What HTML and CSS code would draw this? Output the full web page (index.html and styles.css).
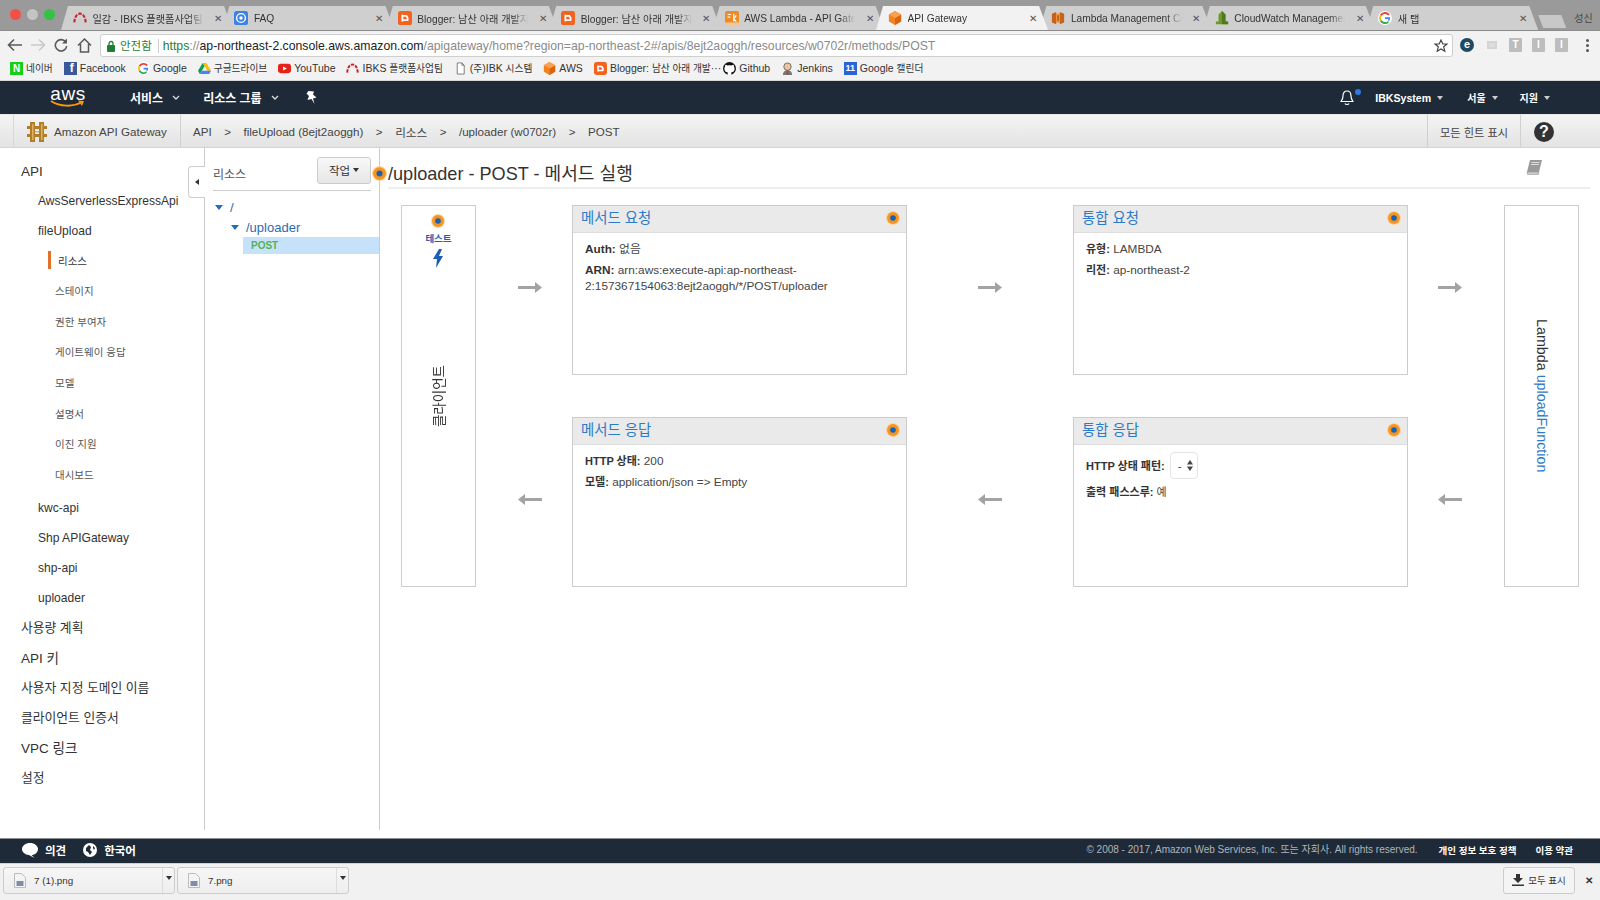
FILE: index.html
```html
<!DOCTYPE html>
<html lang="ko">
<head>
<meta charset="utf-8">
<title>API Gateway</title>
<link rel="stylesheet" href="styles.css">
</head>
<body>
<svg class="defs" width="0" height="0" aria-hidden="true">
  <symbol id="ibks" viewBox="0 0 16 16"><path d="M1.5 13C2 6 5 3 8 3s6 3 6.500 10" fill="none" stroke="#c8232c" stroke-width="2.400" stroke-dasharray="4 1.500"/></symbol>
  <symbol id="faq" viewBox="0 0 16 16"><rect width="16" height="16" rx="3" fill="#3b82e8"/><circle cx="8" cy="8" r="5" fill="none" stroke="#fff" stroke-width="1.600"/><circle cx="8" cy="8" r="2" fill="#fff"/></symbol>
  <symbol id="blogger" viewBox="0 0 16 16"><rect width="16" height="16" rx="3" fill="#f4621f"/><path d="M5 5.500h4.500M5 10.500h6M5 5v6M9.500 5.500 11 8v2.500" fill="none" stroke="#fff" stroke-width="2" stroke-linecap="round"/></symbol>
  <symbol id="lamtab" viewBox="0 0 16 16"><rect width="16" height="16" rx="2" fill="#f08a24"/><path d="M3 4h4M3 7h3M10 3v9M10 9l3-4M10 9l3 3" stroke="#fff" stroke-width="1.300" fill="none"/><rect y="13" width="16" height="3" fill="#f4c58f"/></symbol>
  <symbol id="cube" viewBox="0 0 16 16"><path d="M8 0 15 4v8l-7 4-7-4V4z" fill="#f58220"/><path d="M8 8 15 4v8l-7 4z" fill="#d9660f"/><path d="M8 0 15 4 8 8 1 4z" fill="#f9a252"/></symbol>
  <symbol id="lam" viewBox="0 0 16 16"><path d="M1 3 6 1v14l-5-2z" fill="#c8611a"/><path d="M15 3 10 1v14l5-2z" fill="#c8611a"/><path d="M6 3h4v10H6z" fill="#f08a24"/><path d="M7.500 5h1v6h-1z" fill="#7a3a10"/></symbol>
  <symbol id="cw" viewBox="0 0 16 16"><path d="M8 0 12 4v8h3v3H1v-3h3V4z" fill="#6a9a2a"/><path d="M8 0 12 4v8h3v3H8z" fill="#4d7a1c"/></symbol>
  <symbol id="goog" viewBox="0 0 16 16"><circle cx="8" cy="8" r="8" fill="#fff"/><path d="M12.600 4.400A5.800 5.800 0 0 0 3 5.200" fill="none" stroke="#e94235" stroke-width="2.200"/><path d="M3 5.200a5.800 5.800 0 0 0 0 5.600" fill="none" stroke="#fabb05" stroke-width="2.200"/><path d="M3 10.800a5.800 5.800 0 0 0 8.700 1.700" fill="none" stroke="#34a853" stroke-width="2.200"/><path d="M11.700 12.500A5.800 5.800 0 0 0 13.800 7.200H8v1.900h3.700" fill="#4285f4"/></symbol>
  <symbol id="dot" viewBox="0 0 16 16"><circle cx="8" cy="8" r="8" fill="#fbd3a5"/><circle cx="8" cy="8" r="6.800" fill="#f7941e"/><circle cx="8" cy="8" r="3.200" fill="#1461b8"/></symbol>
</svg>

<div class="tabstrip">
  <div class="lights"><i class="light red"></i><i class="light grey"></i><i class="light green"></i></div>
  <div class="tab"><svg class="fav"><use href="#ibks"/></svg><span class="tab-title">일감 - IBKS 플랫폼사업팀</span><span class="tab-x">✕</span></div>
  <div class="tab"><svg class="fav"><use href="#faq"/></svg><span class="tab-title">FAQ</span><span class="tab-x">✕</span></div>
  <div class="tab"><svg class="fav"><use href="#blogger"/></svg><span class="tab-title">Blogger: 남산 아래 개발자들</span><span class="tab-x">✕</span></div>
  <div class="tab"><svg class="fav"><use href="#blogger"/></svg><span class="tab-title">Blogger: 남산 아래 개발자들</span><span class="tab-x">✕</span></div>
  <div class="tab"><svg class="fav"><use href="#lamtab"/></svg><span class="tab-title">AWS Lambda - API Gateway</span><span class="tab-x">✕</span></div>
  <div class="tab active"><svg class="fav"><use href="#cube"/></svg><span class="tab-title">API Gateway</span><span class="tab-x">✕</span></div>
  <div class="tab"><svg class="fav"><use href="#lam"/></svg><span class="tab-title">Lambda Management Console</span><span class="tab-x">✕</span></div>
  <div class="tab"><svg class="fav"><use href="#cw"/></svg><span class="tab-title">CloudWatch Management Console</span><span class="tab-x">✕</span></div>
  <div class="tab"><svg class="fav"><use href="#goog"/></svg><span class="tab-title">새 탭</span><span class="tab-x">✕</span></div>
  <div class="newtab"></div>
  <span class="profile">성신</span>
</div>

<div class="toolbar">
  <svg class="tool t-back" width="16" height="14" viewBox="0 0 16 14"><path d="M15 7H2M7 1.500 1.500 7 7 12.500" fill="none" stroke="#5a5a5a" stroke-width="1.600"/></svg>
  <svg class="tool t-fwd" width="16" height="14" viewBox="0 0 16 14"><path d="M1 7h13M9 1.500 14.500 7 9 12.500" fill="none" stroke="#c9c9c9" stroke-width="1.600"/></svg>
  <svg class="tool t-reload" width="14" height="14" viewBox="0 0 14 14"><path d="M12 4.500A5.700 5.700 0 1 0 12.700 8" fill="none" stroke="#5a5a5a" stroke-width="1.600"/><path d="M13 0.500v5H8z" fill="#5a5a5a"/></svg>
  <svg class="tool t-home" width="15" height="15" viewBox="0 0 15 15"><path d="M1 7.500 7.500 1 14 7.500M3.500 6v8h8V6" fill="none" stroke="#5a5a5a" stroke-width="1.500"/></svg>
  <div class="omnibox">
    <svg class="lock" width="10" height="12" viewBox="0 0 10 12"><rect x="1" y="5" width="8" height="7" rx="1" fill="#1e7e34"/><path d="M3 5V3.500a2 2 0 0 1 4 0V5" fill="none" stroke="#1e7e34" stroke-width="1.300"/></svg>
    <span class="secure">안전함</span>
    <span class="url"><span class="u-https">https</span><span class="u-dim">://</span><span class="u-host">ap-northeast-2.console.aws.amazon.com</span><span class="u-dim">/apigateway/home?region=ap-northeast-2#/apis/8ejt2aoggh/resources/w0702r/methods/POST</span></span>
    <svg class="star" width="14" height="14" viewBox="0 0 14 14"><path d="M7 1l1.800 4h4.200l-3.300 2.800 1.100 4.400L7 9.900 3.200 12.200l1.100-4.400L1 5h4.200z" fill="none" stroke="#444" stroke-width="1.200"/></svg>
  </div>
  <div class="exts">
    <span class="ext-e">e</span>
    <span class="ext-mini"></span>
    <span class="ext-box">T</span>
    <span class="ext-box">I</span>
    <span class="ext-box">I</span>
    <span class="ext-menu"><i></i><i></i><i></i></span>
  </div>
</div>

<div class="bookmarks">
  <span class="bm"><span class="bm-naver">N</span><span class="k">네이버</span></span>
  <span class="bm"><span class="bm-fb">f</span>Facebook</span>
  <span class="bm"><svg class="bi"><use href="#goog"/></svg>Google</span>
  <span class="bm"><svg class="bi" viewBox="0 0 14 14"><path d="M5 1h4l5 8.500h-4z" fill="#fbbc04"/><path d="M5 1 0 9.500l2 3.500 5-8.500z" fill="#0f9d58"/><path d="M2 13h10l2-3.500H4z" fill="#4285f4"/></svg><span class="k">구글드라이브</span></span>
  <span class="bm"><svg class="bi" viewBox="0 0 14 14"><rect y="2" width="14" height="10" rx="3" fill="#e62117"/><path d="M5.500 4.800v4.400L9.500 7z" fill="#fff"/></svg>YouTube</span>
  <span class="bm"><svg class="bi"><use href="#ibks"/></svg><span>IBKS <span class="k">플랫폼사업팀</span></span></span>
  <span class="bm"><svg class="bi" viewBox="0 0 14 14"><path d="M3.500 1h5l2.500 2.500V13h-7.500zM8.500 1v2.500H11" fill="#fff" stroke="#777"/></svg><span>(<span class="k">주</span>)IBK <span class="k">시스템</span></span></span>
  <span class="bm"><svg class="bi"><use href="#cube"/></svg>AWS</span>
  <span class="bm"><svg class="bi"><use href="#blogger"/></svg><span>Blogger: <span class="k">남산 아래 개발</span>···</span></span>
  <span class="bm tight"><svg class="bi" viewBox="0 0 14 14"><circle cx="7" cy="7" r="7" fill="#111"/><path d="M5 14v-3c-2.500 0-3.500-1.500-3.500-4 0-1 .3-1.600.8-2.200-.1-.6-.1-1.300.2-1.900 1 0 1.600.4 2.200.9a7 7 0 0 1 4.600 0c.6-.5 1.200-.9 2.200-.9.300.6.300 1.300.2 1.900.5.600.8 1.200.8 2.200 0 2.500-1 4-3.500 4v3z" fill="#fff"/></svg>Github</span>
  <span class="bm"><svg class="bi" viewBox="0 0 14 14"><circle cx="7" cy="5" r="4" fill="#e8c4a0" stroke="#555" stroke-width=".8"/><path d="M2 14c0-3 2-5 5-5s5 2 5 5z" fill="#777"/><path d="M6 9h2l-.5 5h-1z" fill="#c33"/></svg>Jenkins</span>
  <span class="bm"><span class="bm-cal">11</span><span>Google <span class="k">캘린더</span></span></span>
</div>

<nav class="awsnav">
  <div class="awslogo"><span class="aws-word">aws</span><svg class="smile" width="36" height="8" viewBox="0 0 36 8"><path d="M1 1c9 6 22 6 31 1" fill="none" stroke="#f90" stroke-width="2"/><path d="M28 0.500l6 .5-2 5z" fill="#f90"/></svg></div>
  <span class="nav-item nav-svc">서비스<svg class="chev" width="8" height="6" viewBox="0 0 8 6"><path d="M1 1l3 3 3-3" fill="none" stroke="#ddd" stroke-width="1.300"/></svg></span>
  <span class="nav-item nav-res">리소스 그룹<svg class="chev" width="8" height="6" viewBox="0 0 8 6"><path d="M1 1l3 3 3-3" fill="none" stroke="#ddd" stroke-width="1.300"/></svg></span>
  <svg class="pin" width="11" height="13" viewBox="0 0 11 13"><path d="M2.500 0 8 .5 7 3.500l3.500 3L7 7.500 8.500 13 5.500 8 1.500 9 3 5 .5 2.500z" fill="#fff"/></svg>
  <div class="nav-right">
    <span class="bell"><svg width="14" height="16" viewBox="0 0 14 16"><path d="M7 1c3 0 4 2.500 4 5 0 3 1.500 4.500 2 5.500H1C1.500 10.500 3 9 3 6c0-2.500 1-5 4-5zM5 13.500c.5 1.300 3.500 1.300 4 0" fill="none" stroke="#fff" stroke-width="1.200"/></svg><i class="bell-dot"></i></span>
    <span class="nav-small nav-user">IBKSystem<i class="caret"></i></span>
    <span class="nav-small nav-region">서울<i class="caret"></i></span>
    <span class="nav-small nav-help">지원<i class="caret"></i></span>
  </div>
</nav>

<header class="crumbbar">
  <div class="brand">
    <svg width="20" height="22" viewBox="0 0 20 22"><g fill="#b07d2b"><rect x="0" y="5" width="20" height="3"/><rect x="0" y="13" width="20" height="3"/><rect x="3" y="1" width="5" height="20"/><rect x="12" y="1" width="5" height="20"/></g><g fill="#e3b163"><rect x="5" y="3" width="1.500" height="16"/><rect x="14" y="3" width="1.500" height="16"/><rect x="8" y="10" width="4" height="1.500"/></g></svg>
    <span>Amazon API Gateway</span>
  </div>
  <div class="crumbs">
    <span>API</span><b>&gt;</b><span>fileUpload (8ejt2aoggh)</span><b>&gt;</b><span>리소스</span><b>&gt;</b><span>/uploader (w0702r)</span><b>&gt;</b><span>POST</span>
  </div>
  <div class="hints">모든 힌트 표시</div>
  <div class="helpcell"><span class="helpicon">?</span></div>
</header>

<main class="page">
  <aside class="sidebar">
    <a class="s1">API</a>
    <a class="s2">AwsServerlessExpressApi</a>
    <a class="s2">fileUpload</a>
    <a class="s3 current">리소스</a>
    <a class="s3">스테이지</a>
    <a class="s3">권한 부여자</a>
    <a class="s3">게이트웨이 응답</a>
    <a class="s3">모델</a>
    <a class="s3">설명서</a>
    <a class="s3">이진 지원</a>
    <a class="s3">대시보드</a>
    <a class="s2 after-sub">kwc-api</a>
    <a class="s2">Shp APIGateway</a>
    <a class="s2">shp-api</a>
    <a class="s2">uploader</a>
    <a class="s1 ko after-api">사용량 계획</a>
    <a class="s1">API 키</a>
    <a class="s1 ko">사용자 지정 도메인 이름</a>
    <a class="s1 ko">클라이언트 인증서</a>
    <a class="s1">VPC 링크</a>
    <a class="s1 ko">설정</a>
    <span class="collapse"><i></i></span>
  </aside>

  <section class="tree">
    <div class="tree-head"><span>리소스</span><button class="action">작업<i class="caret dark"></i></button></div>
    <div class="node n-root"><i class="tw"></i><a>/</a></div>
    <div class="node n-up"><i class="tw"></i><a>/uploader</a></div>
    <div class="node-post">POST</div>
    <svg class="tree-dot"><use href="#dot"/></svg>
  </section>

  <section class="content">
    <div class="title-row">
      <h1>/uploader - POST - 메서드 실행</h1>
      <svg width="17" height="16" viewBox="0 0 17 16"><path d="M4 1h12l-3 12H1z" fill="#9a9a9a"/><path d="M1 13h12l-.5 2.500H1.500z" fill="#ccc" stroke="#999" stroke-width=".6"/><path d="M5.500 3.500h8M5 5.500h8" stroke="#ddd"/></svg>
    </div>
    <div class="flow">
      <div class="side client">
        <div class="test">
          <svg class="dot"><use href="#dot"/></svg>
          <a>테스트</a>
          <svg width="11" height="19" viewBox="0 0 11 19"><path d="M6 0 0 10h4L3 19l7-12H6l3-7z" fill="#1a5fb4"/></svg>
        </div>
        <span class="vert up">클라이언트</span>
      </div>

      <div class="arrow-cell a-first"><svg width="24" height="11" viewBox="0 0 24 11"><path d="M0 4h17V0l7 5.500-7 5.500V7H0z" fill="#a3a3a3"/></svg></div>

      <div class="card">
        <div class="card-h"><a>메서드 요청</a><svg class="dot"><use href="#dot"/></svg></div>
        <div class="card-b">
          <p><b>Auth:</b> 없음</p>
          <p><b>ARN:</b> arn:aws:execute-api:ap-northeast-2:157367154063:8ejt2aoggh/*/POST/uploader</p>
        </div>
      </div>

      <div class="arrow-cell"><svg width="24" height="11" viewBox="0 0 24 11"><path d="M0 4h17V0l7 5.500-7 5.500V7H0z" fill="#a3a3a3"/></svg></div>

      <div class="card">
        <div class="card-h"><a>통합 요청</a><svg class="dot"><use href="#dot"/></svg></div>
        <div class="card-b">
          <p><b class="ko">유형:</b> LAMBDA</p>
          <p><b class="ko">리전:</b> ap-northeast-2</p>
        </div>
      </div>

      <div class="arrow-cell a-last"><svg width="24" height="11" viewBox="0 0 24 11"><path d="M0 4h17V0l7 5.500-7 5.500V7H0z" fill="#a3a3a3"/></svg></div>

      <div class="side lambda"><span class="vert big">Lambda <a>uploadFunction</a></span></div>

      <div class="arrow-cell row3 a-first"><svg width="24" height="11" viewBox="0 0 24 11"><path d="M24 4H7V0L0 5.500 7 11V7h17z" fill="#a3a3a3"/></svg></div>

      <div class="card row3">
        <div class="card-h"><a>메서드 응답</a><svg class="dot"><use href="#dot"/></svg></div>
        <div class="card-b">
          <p><b class="ko">HTTP 상태:</b> 200</p>
          <p><b class="ko">모델:</b> application/json =&gt; Empty</p>
        </div>
      </div>

      <div class="arrow-cell row3"><svg width="24" height="11" viewBox="0 0 24 11"><path d="M24 4H7V0L0 5.500 7 11V7h17z" fill="#a3a3a3"/></svg></div>

      <div class="card row3">
        <div class="card-h"><a>통합 응답</a><svg class="dot"><use href="#dot"/></svg></div>
        <div class="card-b">
          <p class="pattern"><b class="ko">HTTP 상태 패턴:</b><span class="sel">-<svg width="6" height="11" viewBox="0 0 6 11"><path d="M3 0l3 4.500H0zM3 11l3-4.500H0z" fill="#444"/></svg></span></p>
          <p class="ko-line"><b class="ko">출력 패스스루:</b> 예</p>
        </div>
      </div>

      <div class="arrow-cell row3 a-last"><svg width="24" height="11" viewBox="0 0 24 11"><path d="M24 4H7V0L0 5.500 7 11V7h17z" fill="#a3a3a3"/></svg></div>
    </div>
  </section>
</main>

<footer class="awsfoot">
  <svg class="f-ic" width="16" height="15" viewBox="0 0 16 15"><path d="M8 0c4.400 0 8 2.700 8 6s-3 6-6.500 6l3 3-5.500-3C3 11.700 0 9.200 0 6c0-3.300 3.600-6 8-6z" fill="#fff"/></svg>
  <span class="f-label">의견</span>
  <svg class="f-ic f-globe" width="14" height="14" viewBox="0 0 14 14"><circle cx="7" cy="7" r="7" fill="#fff"/><path d="M3 5l3-3 2 2-1 3 2 2-2 3-2-3-2-1zM10 3l2 2-1 2-1-2z" fill="#1f2a38"/></svg>
  <span class="f-label">한국어</span>
  <span class="f-copy">© 2008 - 2017, Amazon Web Services, Inc. 또는 자회사. All rights reserved.</span>
  <span class="f-link f-privacy">개인 정보 보호 정책</span>
  <span class="f-link f-terms">이용 약관</span>
</footer>

<div class="downloads">
  <div class="dl"><svg class="dl-ic" width="12" height="15" viewBox="0 0 12 15"><path d="M.5.500h7l4 4v10H.500z" fill="#f4f4f4" stroke="#bbb"/><rect x="2.500" y="8" width="7" height="5" fill="#7d8fa8"/></svg><span class="dl-name">7 (1).png</span><span class="dl-drop"><i class="caret dark"></i></span></div>
  <div class="dl dl2"><svg class="dl-ic" width="12" height="15" viewBox="0 0 12 15"><path d="M.5.500h7l4 4v10H.500z" fill="#f4f4f4" stroke="#bbb"/><rect x="2.500" y="8" width="7" height="5" fill="#7d8fa8"/></svg><span class="dl-name">7.png</span><span class="dl-drop"><i class="caret dark"></i></span></div>
  <div class="showall"><svg width="12" height="12" viewBox="0 0 12 12"><path d="M4 0h4v4h3L6 9 1 4h3zM0 10.500h12V12H0z" fill="#333"/></svg>모두 표시</div>
  <span class="dl-close">✕</span>
</div>
</body>
</html>
```
FILE: styles.css
```css
* { box-sizing: border-box; }
html, body { margin: 0; height: 100%; }
body {
  width: 1600px; height: 900px; overflow: hidden;
  display: flex; flex-direction: column;
  font-family: "Liberation Sans", "Noto Sans CJK KR", sans-serif;
  color: #444; background: #fff;
}
.defs { position: absolute; }
a { color: inherit; text-decoration: none; }
p, h1 { margin: 0; }

/* browser tabs */
.tabstrip {
  height: 31px; flex: none; display: flex; align-items: flex-end;
  background: #9a9a9a; border-bottom: 1px solid #8a8a8a; padding-top: 7px;
}
.lights { width: 69.600px; height: 24px; flex: none; display: flex; gap: 6px; padding: 3px 0 0 10px; align-self: flex-start; margin-top: -1px; }
.light { width: 11px; height: 11px; border-radius: 50%; }
.light.red { background: #f0504a; }
.light.grey { background: #c4c4c4; }
.light.green { background: #35c046; }
.tab {
  width: 172px; height: 24px; flex: none; margin-left: -8.600px;
  position: relative; display: flex; align-items: center; padding-left: 12px;
  font-size: 10.200px; color: #333;
  clip-path: polygon(0 100%, 7px 0, 163px 0, 172px 100%);
  background: #cfcfcf;
}
.lights + .tab { margin-left: -8.600px; }
.lights + .tab + .tab { margin-left: -10.600px; }
.tab.active { background: #f2f2f2; z-index: 2; }
.fav { width: 14px; height: 14px; flex: none; }
.tab-title {
  width: 111px; margin-left: 5.500px; white-space: nowrap; overflow: hidden;
  -webkit-mask-image: linear-gradient(90deg, #000 86%, transparent);
  mask-image: linear-gradient(90deg, #000 86%, transparent);
}
.tab-x { margin-left: 10.500px; font-size: 10px; color: #555; }
.newtab {
  width: 28px; height: 13px; flex: none; margin: 0 0 2px 0; background: #c8c8c8;
  clip-path: polygon(0 0, 23px 0, 28px 100%, 5px 100%);
}
.profile { margin-left: 8px; font-size: 10px; color: #444; align-self: flex-start; margin-top: 3px; white-space: nowrap; }

/* toolbar */
.toolbar { height: 27px; flex: none; display: flex; align-items: center; background: #f2f2f2; padding-top: 1px; }
.tool { flex: none; }
.t-back { margin-left: 7px; }
.t-fwd { margin-left: 7px; }
.t-reload { margin-left: 8px; }
.t-home { margin-left: 9px; }
.omnibox {
  width: 1353px; height: 23px; margin-left: 8px; flex: none;
  display: flex; align-items: center; background: #fff;
  border: 1px solid #cfcfcf; border-radius: 3px; padding: 1px 0 0 5px;
  font-size: 12px; white-space: nowrap;
}
.secure { margin-left: 4px; color: #1e7e34; padding-right: 6px; border-right: 1px solid #ccc; font-size: 11.500px; line-height: 14px; }
.url { margin-left: 4px; font-size: 12.260px; }
.u-https { color: #1e7e34; }
.u-dim { color: #8a8a8a; }
.u-host { color: #222; }
.star { margin-left: auto; margin-right: 4px; }
.exts { display: flex; align-items: center; margin-left: 7px; }
.ext-e {
  width: 14px; height: 14px; border-radius: 50%; background: #1f4a63; color: #fff;
  font-size: 11px; font-weight: 700; line-height: 13px; text-align: center;
}
.ext-mini { width: 10px; height: 8px; margin-left: 13px; background: #ddd; border: 2px solid #d4d4d4; }
.ext-box {
  width: 13px; height: 14px; margin-left: 12px; background: #bdbdbd; color: #fff;
  font-size: 10px; font-weight: 700; line-height: 14px; text-align: center; border-radius: 1px;
}
.ext-box:nth-child(4) { margin-left: 10px; }
.ext-box:nth-child(5) { margin-left: 10px; }
.ext-menu { margin-left: 18px; display: flex; flex-direction: column; gap: 2px; }
.ext-menu i { width: 3px; height: 3px; border-radius: 50%; background: #555; }

/* bookmarks */
.bookmarks {
  height: 23px; flex: none; display: flex; align-items: center; gap: 11px;
  padding: 0 0 2px 10px; background: #f2f2f2; border-bottom: 1px solid #d8d8d8;
  font-size: 10.500px; color: #333; white-space: nowrap;
}
.bm { display: flex; align-items: center; gap: 3px; }
.k { font-size: 9.700px; }
.bm.tight { margin-left: -9px; }
.bi { width: 13px; height: 13px; flex: none; }
.bm-naver, .bm-fb, .bm-cal {
  width: 13px; height: 13px; flex: none; color: #fff; font-weight: 700;
  text-align: center; line-height: 13px;
}
.bm-naver { background: #19ce18; font-size: 10px; }
.bm-fb { background: #3b5998; font-size: 12px; padding-left: 3px; }
.bm-cal { background: #2a63d8; font-size: 9px; }

/* aws nav */
.awsnav {
  height: 33px; flex: none; display: flex; align-items: center;
  background: #1f2a38; color: #fff; font-weight: 700;
}
.awslogo { width: 36px; margin-left: 50px; position: relative; display: flex; flex-direction: column; align-items: center; }
.aws-word { font-size: 19px; font-weight: 400; line-height: 14px; letter-spacing: .500px; }
.smile { margin-top: -1px; }
.nav-item { font-size: 12px; display: flex; align-items: center; }
.chev { margin-left: 9px; }
.nav-svc { margin-left: 44px; }
.nav-res { margin-left: 23px; }
.pin { margin-left: 27px; }
.nav-right { margin-left: auto; display: flex; align-items: center; }
.bell { position: relative; display: flex; margin-right: 21px; }
.bell-dot { position: absolute; top: -1px; right: -7px; width: 6px; height: 6px; border-radius: 50%; background: #2a7ae2; }
.nav-small { font-size: 10.600px; display: flex; align-items: center; }
.caret { width: 0; height: 0; margin-left: 6px; border: 3px solid transparent; border-top: 4px solid #ccc; border-bottom: 0; }
.caret.dark { border-top-color: #333; }
.nav-region { margin-left: 24px; font-size: 10px; }
.nav-help { margin-left: 22px; margin-right: 50px; font-size: 10px; }

/* breadcrumb */
.crumbbar {
  height: 34px; flex: none; display: flex; align-items: stretch; padding-left: 13px;
  background: linear-gradient(#f4f4f4, #e3e3e3); border-bottom: 1px solid #d4d4d4;
  border-top: 1px solid #e8e8e8; font-size: 11.600px; color: #444;
}
.brand { width: 168px; flex: none; display: flex; align-items: center; gap: 7px; padding: 1px 0 0 13px; border-left: 1px solid #d8d8d8; border-right: 1px solid #d0d0d0; }
.crumbs { display: flex; align-items: center; padding: 1px 0 0 12px; gap: 12.500px; }
.crumbs b { font-weight: 400; }
.hints { margin-left: auto; width: 94px; display: flex; align-items: center; justify-content: center; padding-top: 1px; border-left: 1px solid #d0d0d0; border-right: 1px solid #d0d0d0; font-size: 11.200px; }
.helpcell { width: 79px; display: flex; align-items: center; padding: 1px 0 0 13px; }
.helpicon { width: 20px; height: 20px; border-radius: 50%; background: #333; color: #fff; font-size: 16px; font-weight: 700; line-height: 20px; text-align: center; }

/* page */
.page { flex: 1; min-height: 0; display: flex; }
.sidebar { width: 205px; flex: none; position: relative; border-right: 1px solid #ccc; margin-bottom: 8px; padding-top: 8px; display: flex; flex-direction: column; font-size: 13px; color: #333; }
.sidebar a { height: 30px; display: flex; align-items: center; white-space: nowrap; flex: none; }
.sidebar a:nth-child(n+5):nth-child(-n+11) { height: 30.700px; }
.s1 { padding-left: 21px; font-size: 13.500px; }
.s1.ko { font-size: 12.800px; }
.s2 { padding-left: 38px; font-size: 12.050px; }
.s2.after-sub { margin-top: 2px; }
.s1.after-api { margin-top: -1px; }
.s3 { padding-left: 55px; font-size: 10.500px; color: #555; position: relative; top: -1px; }
.s3.current { padding-left: 58px; color: #333; }
.s3.current::before { content: ""; position: absolute; left: 48px; top: 6px; height: 18px; width: 3px; background: #e0702a; }
.collapse {
  position: absolute; right: -1px; top: 18px; width: 17px; height: 32px;
  background: #fff; border: 1px solid #ccc; border-right: 0; border-radius: 4px 0 0 4px;
  display: flex; align-items: center; justify-content: center;
}
.collapse i { border: 3px solid transparent; border-right: 4px solid #333; border-left: 0; }

.tree { width: 175px; flex: none; position: relative; border-right: 1px solid #ccc; margin-bottom: 8px; font-size: 12px; }
.tree-head {
  height: 43px; margin: 0 8px; display: flex; align-items: flex-end; justify-content: space-between;
  border-bottom: 1px solid #ccc; color: #555; padding-bottom: 8px;
}
.action {
  width: 54px; height: 27px; margin-bottom: -2px; padding: 0 0 2px; border: 1px solid #ccc; border-radius: 3px;
  background: linear-gradient(#f8f8f8, #e6e6e6); font: inherit; font-size: 11.500px; color: #333;
  display: flex; align-items: center; justify-content: center;
}
.action .caret { margin-left: 3px; }
.node { display: flex; align-items: center; color: #2a6bb0; }
.node a { font-size: 13px; }
.tw { width: 0; height: 0; border: 4.500px solid transparent; border-top: 5px solid #1a6fc0; border-bottom: 0; margin-right: 7px; }
.n-root { padding: 9px 0 0 10px; }
.n-up { padding: 5px 0 0 26px; }
.n-up .tw { margin-right: 7px; }
.node-post { margin: 2px 0 0 38px; height: 17px; background: #c6e2fb; color: #55b05a; font-size: 10px; font-weight: 700; line-height: 17px; padding-left: 8px; }
.tree-dot { position: absolute; right: -8px; top: 18px; width: 15px; height: 15px; z-index: 2; }

.content { flex: 1; min-width: 0; padding: 0 10px 0 8px; }
.title-row { height: 41px; display: flex; align-items: flex-end; justify-content: space-between; border-bottom: 2px solid #eee; padding: 0 47px 1px 0; }
.title-row svg { margin-bottom: 11px; }
h1 { font-size: 18.100px; font-weight: 400; color: #333; line-height: 24px; }
.flow {
  margin: 16px 0 0 13px; display: grid;
  grid-template-columns: 75px 96px 335px 166px 335px 96px 75px;
  grid-template-rows: 170px 42px 170px;
}
.side { grid-row: 1 / 4; border: 1px solid #ccc; }
.dot { width: 14px; height: 14px; flex: none; }
.client { display: grid; grid-template-rows: 1fr auto 1fr; justify-items: center; }
.test { grid-row: 1; display: flex; flex-direction: column; align-items: center; padding-top: 8px; }
.test a { font-size: 9.500px; font-weight: 700; color: #2a5bb0; margin: 5px 0 4px; line-height: 12px; }
.vert { writing-mode: vertical-rl; text-orientation: sideways; font-size: 13.500px; color: #333; white-space: nowrap; }
.vert.big { font-size: 14.300px; }
.client .vert { grid-row: 2; margin-right: 1px; }
.vert.up { transform: rotate(180deg); }
.lambda { grid-column: 7; display: flex; align-items: center; justify-content: center; }
.vert a { color: #2b7bc8; }
.arrow-cell { display: flex; align-items: center; justify-content: center; padding-bottom: 5px; }
.a-first { padding-left: 12px; }
.a-last { padding-right: 12px; }
.row3 { grid-row: 3; }
.card { border: 1px solid #ccc; display: flex; flex-direction: column; }
.card-h {
  height: 27px; flex: none; display: flex; align-items: center; justify-content: space-between;
  background: #eaeaea; border-bottom: 1px solid #ddd; padding: 0 6px 5px 8px;
  font-size: 14.400px; color: #2b7bc8;
}
.card-h .dot { margin-top: 3px; }
.card-b { padding: 8px 12px; font-size: 11.800px; line-height: 16px; color: #444; }
.card-b p { margin-bottom: 5px; }
.card-b b { color: #333; }
.card-b b.ko { font-size: 11px; }
.pattern { display: flex; align-items: center; margin-top: -1px; }
.sel { margin-left: 5px; width: 28px; height: 27px; border: 1px solid #e4e4e4; border-radius: 4px; display: flex; align-items: center; justify-content: space-between; padding: 0 4px 0 7px; }
.ko-line { margin-top: 5px; font-size: 11px; }

/* footer */
.awsfoot {
  height: 25px; flex: none; display: flex; align-items: center; padding: 0 0 2px 22px;
  background: #1f2a38; border-top: 1px solid #8b8f94; color: #fff; font-size: 11.500px; font-weight: 700;
}
.f-label { margin-left: 7px; }
.f-globe { margin-left: 17px; }
.f-copy { margin-left: auto; font-size: 10px; font-weight: 400; color: #b0b4b9; line-height: 12px; }
.f-link { font-size: 9.500px; }
.f-privacy { margin-left: 21px; }
.f-terms { margin-left: 19px; margin-right: 27px; }

/* downloads */
.downloads {
  height: 37px; flex: none; display: flex; align-items: center; padding: 0 0 4px 3px; gap: 2px;
  background: #f1f1f1; border-top: 1px solid #d0d0d0; font-size: 9.800px; color: #333;
}
.dl { width: 172px; height: 27px; display: flex; align-items: center; padding-left: 10px; border: 1px solid #ccc; border-radius: 3px; background: linear-gradient(#f6f6f6, #eee); }
.dl-name { margin-left: 8px; }
.dl-drop { margin-left: auto; width: 12px; height: 100%; border-left: 1px solid #ddd; display: flex; align-items: center; justify-content: center; padding-bottom: 4px; }
.dl-drop .caret { margin-left: 0; }
.showall { margin-left: auto; width: 72px; height: 27px; display: flex; align-items: center; justify-content: center; gap: 4px; border: 1px solid #ccc; border-radius: 3px; font-size: 9.500px; background: #f4f4f4; }
.dl-close { width: 22px; text-align: center; font-size: 10px; font-weight: 700; margin-left: 1px; }
```
